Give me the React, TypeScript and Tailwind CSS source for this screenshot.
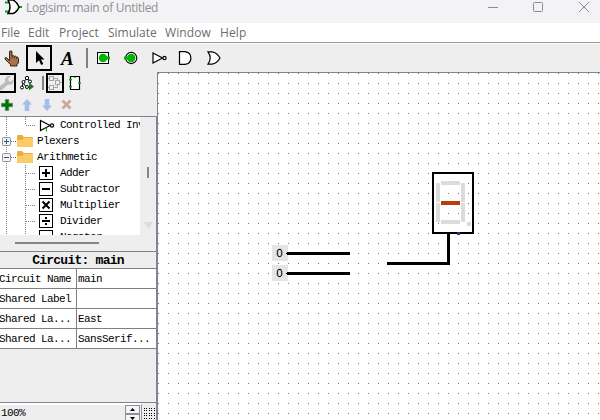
import React from "react";

const mono = "font-['Liberation_Mono',monospace]";
const ui = "font-['Open_Sans','Noto_Sans',sans-serif]";

function GateNot() {
  return (
    <>
      <path d="M1 2 V12 L10.500 7 Z" fill="white" stroke="black" strokeWidth="1.2" />
      <circle cx="12.500" cy="7" r="1.600" fill="white" stroke="black" strokeWidth="1.200" />
    </>
  );
}

function Toolbar() {
  return (
    <div className="flex h-[28px] shrink-0 items-center bg-[#eeeeee]">
      <svg className="ml-1 h-[17px] w-4 shrink-0" viewBox="0 0 16 17">
        <path
          d="M5.500 10.500 V2 Q5.500 .8 6.700 .8 Q8 .8 8 2 V6 Q9.500 5 10.300 6.300 Q11.800 5.600 12.500 7 Q14.300 6.600 14.500 8.500 V12 Q14.300 13.500 13 14.500 V16 H6.500 V14.500 Q4 12.500 1 9 Q.6 7.300 2.300 7.500 Z"
          fill="#a9714b"
          stroke="#24130b"
          strokeWidth=".9"
        />
        <path d="M8 6 V8.500 M10.300 6.500 V8.500 M12.500 7 V9" stroke="#4a2a16" strokeWidth=".8" />
      </svg>
      <div className="ml-[6px] flex h-[26px] w-[26px] shrink-0 items-center justify-center border-2 border-black">
        <svg className="ml-px h-[16px] w-[12px]" viewBox="0 0 12 16">
          <path d="M2 1 V13 L5 10.300 L7.200 15 L9.300 14 L7 9.500 H10.500 Z" fill="black" />
        </svg>
      </div>
      <span className="ml-[9px] w-[15px] shrink-0 pt-px font-['Liberation_Serif',serif] text-[19px] leading-[22px] font-bold italic">A</span>
      <div className="ml-[10px] h-[20px] w-[2px] shrink-0 bg-[#808080]" />
      <svg className="ml-[8px] h-[14px] w-[14px] shrink-0" viewBox="0 0 14 14">
        <rect x="1.500" y="1.500" width="11" height="11" fill="white" stroke="black" shapeRendering="crispEdges" />
        <circle cx="7" cy="7" r="4.200" fill="#00b400" />
        <path d="M10 5.500 H14 V8.500 H10 Z" fill="#00b400" />
      </svg>
      <svg className="ml-[14px] h-[14px] w-[14px] shrink-0" viewBox="0 0 14 14">
        <circle cx="7.200" cy="7" r="5.600" fill="white" stroke="black" strokeWidth="1.100" />
        <circle cx="7.200" cy="7" r="4.200" fill="#00b400" />
        <path d="M0 5.500 H4 V8.500 H0 Z" fill="#00b400" />
      </svg>
      <svg className="ml-[14px] h-[14px] w-[15px] shrink-0" viewBox="0 0 15 14"><GateNot /></svg>
      <svg className="ml-[11px] h-[14px] w-[14px] shrink-0" viewBox="0 0 14 14">
        <path d="M1.500 .6 H7 Q12.900 1.500 12.900 7 Q12.900 12.500 7 13.400 H1.500 Z" fill="white" stroke="black" strokeWidth="1.200" />
      </svg>
      <svg className="ml-[15px] h-[14px] w-[14px] shrink-0" viewBox="0 0 14 14">
        <path d="M1 .8 H5 Q10 1.500 13 7 Q10 12.500 5 13.200 H1 Q5.500 7 1 .8 Z" fill="white" stroke="black" strokeWidth="1.200" />
      </svg>
    </div>
  );
}

function ExplorerBars() {
  return (
    <div className="h-[44px] shrink-0">
      <div className="flex h-[22px] items-center">
        <div className="flex h-5 w-4 shrink-0 items-center border-y-2 border-r-2 border-black bg-[#eeeeee]">
          <svg className="h-4 w-[14px]" viewBox="0 0 14 16">
            <path d="M0 11 L5.300 7 Q4.300 2.500 8 1 Q9.500 .4 11 1 L8.300 3.700 L8.800 6 L11 6.400 L13.600 4 Q14 8.500 10.500 9.800 L7.700 9.800 L2 15 Q1 15.800 0 15 Z" fill="#bfbbba" />
          </svg>
        </div>
        <svg className="ml-1 h-4 w-[15px] shrink-0" viewBox="0 0 15 16">
          <path d="M7 3 L3 8 L2 13 M7 3 L11 8 M3 8 L7 13" fill="none" stroke="black" strokeWidth="1" />
          <g fill="white" stroke="black" strokeWidth="1">
            <circle cx="7" cy="3" r="1.700" />
            <circle cx="3.500" cy="7" r="1.500" />
            <circle cx="2" cy="12.500" r="1.500" />
            <circle cx="7" cy="12" r="1.500" />
            <circle cx="10" cy="6.500" r="1.500" />
          </g>
          <path d="M9 7.500 L14 11.500 L9 15.500 Z" fill="#167a26" />
        </svg>
        <div className="ml-[7px] h-[14px] w-[2px] shrink-0 bg-[#808080]" />
        <div className="ml-[2px] flex h-5 w-[18px] shrink-0 items-center justify-center border-2 border-black">
          <svg className="h-[14px] w-[14px]" viewBox="0 0 14 14" shapeRendering="crispEdges">
            <path d="M0 2.500 H2 M0 11.500 H2 M5 2.500 H9.500 V4.500 M5 11.500 H9.500 V8.500 M11 6.500 H14" fill="none" stroke="#a6a6a6" />
            <path d="M1.500 .500 H5.500 V4.500 H1.500 Z M1.500 9.500 H5.500 V13.500 H1.500 Z M7.500 4.500 H11.500 V8.500 H7.500 Z" fill="#eee" stroke="#a6a6a6" />
          </svg>
        </div>
        <svg className="ml-[5px] h-4 w-[12px] shrink-0" viewBox="0 0 12 16">
          <path d="M1.500 1.500 H10.500 V14.500 H1.500 Z" fill="white" stroke="black" strokeWidth="1.200" />
          <path d="M4.500 2 Q6 4.500 7.500 2 Z" fill="#999" />
          <path d="M0 4.500 H3 M0 11.500 H3 M9 8 H12" stroke="#00b400" strokeWidth="1.500" />
        </svg>
      </div>
      <div className="flex h-[22px] items-center pb-px">
        <svg className="ml-[1px] h-[12px] w-[12px] shrink-0" viewBox="0 0 12 12">
          <path d="M4.300 .5 H7.700 V4.300 H11.500 V7.700 H7.700 V11.500 H4.300 V7.700 H.5 V4.300 H4.300 Z" fill="#087008" stroke="#4b8b4b" strokeWidth=".6" />
        </svg>
        <svg className="ml-[8px] h-[12px] w-[12px] shrink-0" viewBox="0 0 11 12">
          <path d="M5.500 0 L10.500 5.500 H7.800 V12 H3.200 V5.500 H.5 Z" fill="#a6bdea" />
        </svg>
        <svg className="ml-[8px] h-[12px] w-[12px] shrink-0" viewBox="0 0 11 12">
          <path d="M5.500 12 L10.500 6.500 H7.800 V0 H3.200 V6.500 H.5 Z" fill="#a6bdea" />
        </svg>
        <svg className="ml-[8px] h-[11px] w-[11px] shrink-0" viewBox="0 0 11 11">
          <path d="M1.500 1.500 L9.500 9.500 M9.500 1.500 L1.500 9.500" stroke="#cda79d" strokeWidth="2.600" />
        </svg>
      </div>
    </div>
  );
}

const treeText = `${mono} text-[11px] leading-[17px] tracking-[-0.6px] whitespace-pre text-black`;

function FolderRow({ label, open }: { label: string; open?: boolean }) {
  return (
    <div className="flex h-4 shrink-0">
      <svg className="h-4 w-[37px] shrink-0" viewBox="0 0 37 16">
        <path d="M6.500 0 V16 M11 8.500 H17" stroke="#808080" strokeDasharray="1 1" shapeRendering="crispEdges" />
        <rect x="2.500" y="4.500" width="8" height="8" rx="1" fill="#f3f3f3" stroke="#919191" />
        <path d={open ? "M4 8.500 H9" : "M4 8.500 H9 M6.500 6 V11"} stroke="#2854a8" shapeRendering="crispEdges" />
        <path d="M17 3 Q17 2 18 2 H22 L24 4 H32 Q33 4 33 5 V14 H17 Z" fill="#e8ae42" />
        <path d="M17 7 H22 L24 5 H33 V13 Q33 14 32 14 H18 Q17 14 17 13 Z" fill="#fbcb66" />
      </svg>
      <span className={treeText}>{label}</span>
    </div>
  );
}

function LeafRow({ label, mark }: { label: string; mark: string }) {
  return (
    <div className="flex h-4 shrink-0">
      <svg className="h-4 w-[60px] shrink-0" viewBox="0 0 60 16">
        <path
          d={mark === "inv" ? "M6.500 0 V16 M25.500 0 V8 M26 8.500 H35" : "M6.500 0 V16 M25.500 0 V16 M26 8.500 H35"}
          fill="none" stroke="#808080" strokeDasharray="1 1" shapeRendering="crispEdges"
        />
        {mark === "inv" ? (
          <g transform="translate(39.500 1.500)">
            <GateNot />
            <path d="M7 9 V13" stroke="#00b400" />
          </g>
        ) : (
          <g>
            <rect x="39.500" y="1.500" width="13" height="13" fill="white" stroke="black" shapeRendering="crispEdges" />
            {(mark === "+" || mark === "-" || mark === "/") && <path d="M42 8 H50" stroke="black" strokeWidth="2" shapeRendering="crispEdges" />}
            {mark === "+" && <path d="M46 4 V12" stroke="black" strokeWidth="2" shapeRendering="crispEdges" />}
            {mark === "x" && <path d="M42.500 4.500 L49.500 11.500 M49.500 4.500 L42.500 11.500" stroke="black" strokeWidth="2" />}
            {mark === "/" && <path d="M45 4 H47 V6 H45 Z M45 10 H47 V12 H45 Z" fill="black" />}
          </g>
        )}
      </svg>
      <span className={treeText}>{label}</span>
    </div>
  );
}

function Tree() {
  return (
    <div className="flex h-[134px] shrink-0 flex-col">
      <div className="flex h-[118px]">
        <div className="flex w-[140px] shrink-0 flex-col overflow-hidden bg-white">
          <LeafRow label="Controlled Inverter" mark="inv" />
          <FolderRow label="Plexers" />
          <FolderRow label="Arithmetic" open />
          <LeafRow label="Adder" mark="+" />
          <LeafRow label="Subtractor" mark="-" />
          <LeafRow label="Multiplier" mark="x" />
          <LeafRow label="Divider" mark="/" />
          <LeafRow label="Negator" mark="n" />
        </div>
        <div className="flex flex-1 flex-col items-center pt-[50px]">
          <div className="h-[11px] w-[2px] bg-[#858585]" />
          <svg className="mt-[44px] h-[7px] w-[9px]" viewBox="0 0 9 7"><path d="M0 0 H9 L4.500 7 Z" fill="#dcdcdc" /></svg>
        </div>
      </div>
      <div className="mt-[7px] ml-[15px] h-[2px] w-[84px] bg-[#858585]" />
    </div>
  );
}

const rows: [string, string][] = [
  ["Circuit Name", "main"],
  ["Shared Label", ""],
  ["Shared La...", "East"],
  ["Shared La...", "SansSerif..."],
];

function Attributes() {
  return (
    <div className="shrink-0">
      <div className={`h-4 text-center ${mono} text-[13px] leading-[17px] font-bold tracking-[-0.75px]`}>Circuit: main</div>
      <div className="border-t border-[#808080] bg-white">
        {rows.map(([k, v], i) => (
          <div key={i} className="flex h-5 border-b border-[#808080]">
            <div className={`w-[77px] border-r border-[#808080] ${mono} -indent-px text-[11px] leading-[21px] tracking-[-0.6px]`}>{k}</div>
            <div className={`pl-[1px] ${mono} text-[11px] leading-[21px] tracking-[-0.6px]`}>{v}</div>
          </div>
        ))}
      </div>
    </div>
  );
}

function ZoomBar() {
  return (
    <div className="flex h-[17px] shrink-0 border-r-2 border-[#7e8490]">
      <div className="flex w-[142px] border-t-2 border-r border-t-white border-r-[#999]">
        <span className={`w-[125px] pl-[1px] pt-[1px] ${mono} text-[11px] leading-[15px] tracking-[-0.6px]`}>100%</span>
        <div className="w-[15px] shrink-0 overflow-hidden">
          <div className="flex h-[9px] items-center justify-center border border-[#8d9299] bg-[#f4f4f4]">
            <svg className="h-[3px] w-[5px]" viewBox="0 0 5 3"><path d="M0 3 L2.500 0 L5 3 Z" /></svg>
          </div>
          <div className="flex h-[9px] items-center justify-center border border-[#8d9299] bg-[#f4f4f4]">
            <svg className="h-[3px] w-[5px]" viewBox="0 0 5 3"><path d="M0 0 L2.500 3 L5 0 Z" /></svg>
          </div>
        </div>
      </div>
      <svg className="mt-[5px] ml-[2px] h-[12px] w-[11px] shrink-0" viewBox="0 0 11 12" shapeRendering="crispEdges">
        {[0, 2, 5, 7, 10].map((y) => (
          <path key={y} d={`M0 ${y}.500 H1 M2 ${y}.500 H3 M5 ${y}.500 H6 M7 ${y}.500 H8 M10 ${y}.500 H11`} stroke="black" />
        ))}
      </svg>
    </div>
  );
}

function Canvas() {
  return (
    <svg className="block h-[347px] w-[442px]" viewBox="158 73 442 347" shapeRendering="crispEdges">
      <defs>
        <pattern id="grid" x="158" y="73" width="10" height="10" patternUnits="userSpaceOnUse">
          <rect width="1" height="1" fill="#777777" />
        </pattern>
      </defs>
      <rect x="158" y="73" width="442" height="347" fill="white" />
      <rect x="158" y="73" width="442" height="347" fill="url(#grid)" />
      {[253, 273].map((y) => (
        <g key={y}>
          <rect x="272" y={y - 8} width="16" height="16" fill="#e5e5e5" />
          <path d={`M287 ${y}.500 H350`} stroke="black" strokeWidth="3" />
          <rect x="286" y={y} width="1" height="1" />
          <text x="276" y={y + 4} fontFamily="DejaVu Sans, sans-serif" fontSize="11" textRendering="geometricPrecision">0</text>
        </g>
      ))}
      <path d="M387 263.500 H448.500 V233" fill="none" stroke="black" strokeWidth="3" />
      <path d="M447 262 H450 V265 H447 Z" />
      <rect x="433" y="173" width="40" height="60" fill="none" stroke="black" strokeWidth="2" />
      <g fill="#dcdcdc">
        <rect x="441" y="181" width="19" height="4" />
        <rect x="441" y="220" width="19" height="4" />
        <rect x="436" y="183" width="4" height="19" />
        <rect x="436" y="203" width="4" height="19" />
        <rect x="461" y="183" width="4" height="19" />
        <rect x="461" y="203" width="4" height="19" />
        <rect x="467" y="222" width="4" height="4" />
      </g>
      <rect x="441" y="201" width="19" height="4" fill="#b83f0b" />
      <rect x="457" y="232" width="3" height="3" fill="#293089" />
    </svg>
  );
}

export default function App() {
  return (
    <div className="flex h-[420px] w-[600px] flex-col overflow-hidden bg-[#eeeeee] text-black">
      <header className={`flex h-[23px] shrink-0 bg-[#f3f3f5] ${ui}`}>
        <svg className="ml-[4px] h-[15px] w-[18px] shrink-0" viewBox="0 0 18 15">
          <path d="M1 2.500 H6 M1 11.500 H6 M14 7 H18" stroke="#00a800" strokeWidth="2" />
          <path d="M4 0 H9 Q13 2 15 7 Q13 12 9 13.500 H4 Q8 7 4 0 Z" fill="white" stroke="black" strokeWidth="1.500" />
        </svg>
        <span className="ml-1 text-[12px] leading-[16px] tracking-[-0.3px] text-[#8f8f8f]">Logisim: main of Untitled</span>
        <svg className="ml-auto h-[16px] w-[112px]" viewBox="488 0 112 16" fill="none" stroke="#8d8d8d">
          <path d="M488 7.500 H498" />
          <rect x="533.500" y="2.500" width="9" height="9" rx="1" />
          <path d="M579 2 L589 12 M589 2 L579 12" />
        </svg>
      </header>
      <nav className={`flex h-[20px] shrink-0 border-b border-[#999999] bg-white pl-px text-[12px] leading-[20px] text-[#6d6d6d] ${ui}`}>
        <span className="w-[27px]">File</span>
        <span className="w-[31px]">Edit</span>
        <span className="w-[49px] tracking-[0.1px]">Project</span>
        <span className="w-[57px]">Simulate</span>
        <span className="w-[55px] tracking-[0.1px]">Window</span>
        <span className="tracking-[0.1px]">Help</span>
      </nav>
      <div className="h-px shrink-0 bg-white" />
      <Toolbar />
      <div className="flex h-[348px] shrink-0">
        <aside className="flex w-[158px] shrink-0 flex-col">
          <ExplorerBars />
          <div className="flex h-[287px] shrink-0 flex-col border-y border-r-2 border-[#7e8490]">
            <Tree />
            <div className="h-px shrink-0 bg-[#7e8490]" />
            <Attributes />
          </div>
          <ZoomBar />
        </aside>
        <main className="-ml-px h-[348px] w-[443px] shrink-0 border-t border-l border-[#7e8490]">
          <Canvas />
        </main>
      </div>
    </div>
  );
}
